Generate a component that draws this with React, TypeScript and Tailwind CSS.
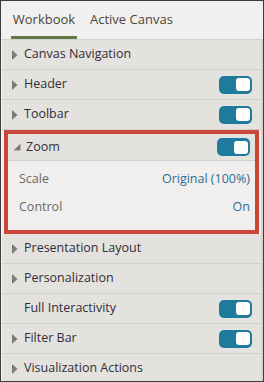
import { ReactNode } from 'react';

type RowProps = {
  label: string;
  arrow?: 'right' | 'down' | 'none';
  toggle?: boolean;
};

function Arrow({ dir }: { dir: 'right' | 'down' | 'none' }) {
  if (dir === 'none') return <span className="w-[13px] shrink-0" />;
  if (dir === 'down') {
    return (
      <svg width="13" height="12" viewBox="0 0 13 12" className="shrink-0">
        <path d="M8.5 2.5 L8.5 9.5 L1.5 9.5 Z" fill="#7d7b79" />
      </svg>
    );
  }
  return (
    <svg width="13" height="12" viewBox="0 0 13 12" className="shrink-0">
      <path d="M2 1 L7.5 6 L2 11 Z" fill="#7d7b79" />
    </svg>
  );
}

function Toggle() {
  return (
    <div className="w-[33px] h-[18px] rounded-[5px] bg-[#1f7b9c] flex items-center justify-end pr-[2px]">
      <div className="w-[14px] h-[13px] rounded-[3px] bg-[#fdfdfd]" />
    </div>
  );
}

function Row({ label, arrow = 'right', toggle }: RowProps) {
  return (
    <div className="h-[30px] flex items-center border-b border-[#d2d0cc] bg-[#e4e2de] pl-[8px] pr-[9px]">
      <Arrow dir={arrow} />
      <span className="ml-[1px] flex-1 text-[#332e38]">{label}</span>
      {toggle && <Toggle />}
    </div>
  );
}

function Section({ children }: { children: ReactNode }) {
  return <div className="mx-[2px] border-[4px] border-[#c9473a]">{children}</div>;
}

export default function App() {
  return (
    <div
      className="w-[264px] h-[382px] border border-[#3c3c3c] bg-[#f1f0ee] flex flex-col text-[12.5px] overflow-hidden"
      style={{ fontFamily: '"Open Sans", "Noto Sans", sans-serif' }}
    >
      <div className="h-[38px] flex items-end pl-[10px] shrink-0 text-[13px]">
        <div className="w-[66px] h-[38px] flex items-center justify-center border-b-[3px] border-[#5e7a45] pt-[2px] text-[#4b4640]">
          Workbook
        </div>
        <div className="ml-[13px] h-[38px] flex items-center pb-[1px] text-[#4b4640]">Active Canvas</div>
      </div>

      <div className="flex-1 border-l border-[#f7f7f5] border-r-[2px] border-r-[#d6d4d0] border-t border-t-[#d2d0cc]">
        <Row label="Canvas Navigation" />
        <Row label="Header" toggle />
        <Row label="Toolbar" toggle />

        <Section>
          <div className="h-[27px] flex items-center border-b border-[#d2d0cc] bg-[#e4e2de] pl-[4px] pr-[5px]">
            <Arrow dir="down" />
            <span className="ml-[1px] flex-1 text-[#332e38]">Zoom</span>
            <Toggle />
          </div>
          <div className="h-[69px] bg-[#f0efed] flex flex-col justify-center gap-[9px] pl-[11px] pr-[5px] pb-[4px]">
            <div className="flex items-center justify-between">
              <span className="text-[#6b6866]">Scale</span>
              <span className="text-[#2e6e92]">Original (100%)</span>
            </div>
            <div className="flex items-center justify-between">
              <span className="text-[#6b6866]">Control</span>
              <span className="text-[#2e6e92]">On</span>
            </div>
          </div>
        </Section>

        <Row label="Presentation Layout" />
        <Row label="Personalization" />
        <Row label="Full Interactivity" arrow="none" toggle />
        <Row label="Filter Bar" toggle />
        <Row label="Visualization Actions" />
      </div>
    </div>
  );
}
